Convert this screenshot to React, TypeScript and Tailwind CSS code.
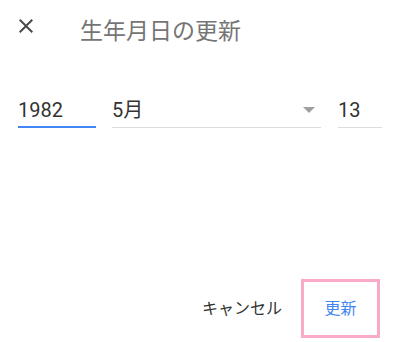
import React from 'react';

function CloseIcon() {
  return (
    <svg width="24" height="24" viewBox="0 0 24 24" className="shrink-0 fill-[#4a4a4a]">
      <path d="M19 6.41L17.59 5 12 10.59 6.41 5 5 6.41 10.59 12 5 17.59 6.41 19 12 13.59 17.59 19 19 17.59 13.41 12z" />
    </svg>
  );
}

export default function App() {
  return (
    <div className="w-[400px] h-[342px] bg-white flex flex-col font-['Roboto','Noto_Sans_CJK_JP',sans-serif]">
      {/* header */}
      <div className="flex items-start pt-[14px] pl-[14px]">
        <CloseIcon />
        <h1 className="ml-[42px] mt-[2px] text-[23px] leading-[32px] text-[#757575] font-normal">
          生年月日の更新
        </h1>
      </div>

      {/* date fields */}
      <div className="flex items-end mt-[50px] pl-[18px] pr-[18px] gap-[16px]">
        <div className="w-[78px] border-b-2 border-[#4285f4] text-[20px] leading-[24px] text-[#333] pb-[4px]">
          1982
        </div>
        <div className="w-[209px] flex items-center justify-between border-b border-[#dcdcdc] text-[20px] leading-[24px] text-[#333] pb-[5px]">
          <span>5月</span>
          <svg width="12" height="6" viewBox="0 0 12 6" className="mr-[6px] fill-[#a0a0a0]">
            <path d="M0 0h12L6 6z" />
          </svg>
        </div>
        <div className="w-[44px] ml-[1px] border-b border-[#dcdcdc] text-[20px] leading-[24px] text-[#333] pb-[5px]">
          13
        </div>
      </div>

      {/* actions */}
      <div className="mt-auto mb-[4px] flex items-center justify-end pr-[20px] gap-[19px]">
        <button className="text-[16px] text-[#333] leading-none">キャンセル</button>
        <button className="w-[79px] h-[59px] border-[3px] border-[#f9aac9] text-[16px] text-[#4285f4] leading-none">
          更新
        </button>
      </div>
    </div>
  );
}
